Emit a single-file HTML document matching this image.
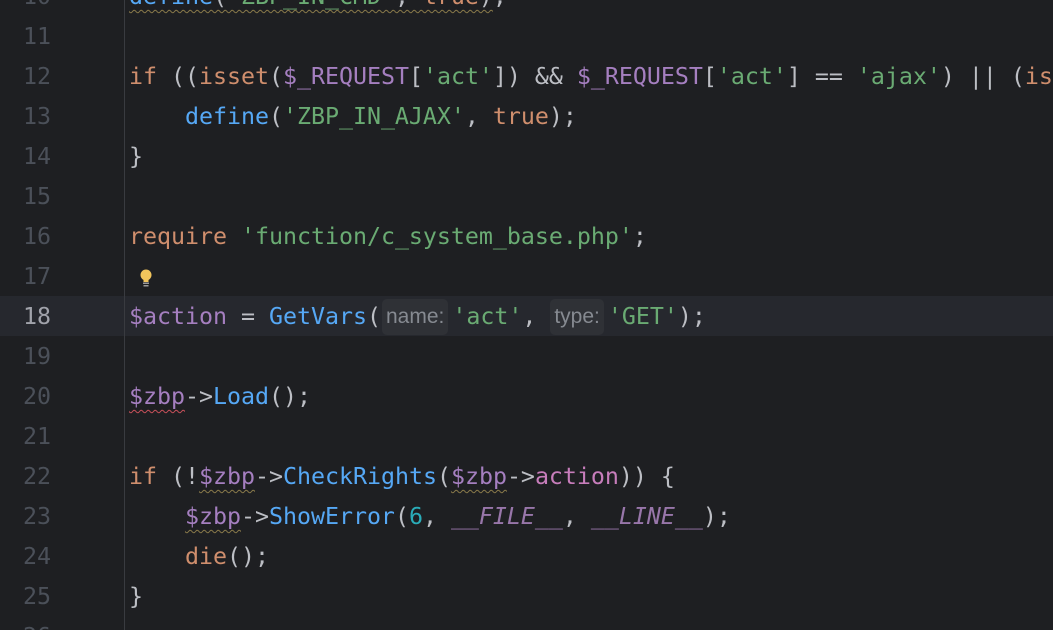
<!DOCTYPE html>
<html><head><meta charset="utf-8"><style>
html,body{margin:0;padding:0;background:#1e1f22;width:1053px;height:630px;overflow:hidden}
.wrap{position:relative;width:1053px;height:630px;font-family:"DejaVu Sans Mono","Liberation Mono",monospace;font-size:23.3px;color:#bcbec4}
.gut{position:absolute;left:124px;top:0;width:1px;height:630px;background:#393b40}
.hl{position:absolute;left:0;top:296px;width:1053px;height:40px;background:#26282e}
.ln{position:absolute;left:0;width:51px;text-align:right;height:40px;line-height:40px;color:#4b5059;white-space:pre}
.ln.cur{color:#a1a3ab}
.cd{position:absolute;left:129px;height:40px;line-height:40px;white-space:pre;letter-spacing:-0.03px}
.k{color:#cf8e6d}.f{color:#56a8f5}.s{color:#6aab73}.v{color:#a57fc0}.p{color:#c77dbb}.n{color:#2aacb8}.c{color:#9876aa;font-style:italic}
.w{text-decoration:underline wavy #8a7a4a;text-underline-offset:5px;text-decoration-thickness:1px}
.r{text-decoration:underline wavy #c9505a;text-underline-offset:5px;text-decoration-thickness:1px}
.h{display:inline-block;background:#2f3136;color:#868a91;font-family:"Liberation Sans",sans-serif;font-size:21px;line-height:36px;height:36px;padding:0 4px;border-radius:5px;vertical-align:top;margin-top:2px;letter-spacing:0}
</style></head><body><div class="wrap">
<div class="hl"></div>
<div class="gut"></div>
<div class="ln" style="top:-23px">10</div>
<div class="ln" style="top:17px">11</div>
<div class="ln" style="top:57px">12</div>
<div class="ln" style="top:97px">13</div>
<div class="ln" style="top:137px">14</div>
<div class="ln" style="top:177px">15</div>
<div class="ln" style="top:217px">16</div>
<div class="ln" style="top:257px">17</div>
<div class="ln cur" style="top:297px">18</div>
<div class="ln" style="top:337px">19</div>
<div class="ln" style="top:377px">20</div>
<div class="ln" style="top:417px">21</div>
<div class="ln" style="top:457px">22</div>
<div class="ln" style="top:497px">23</div>
<div class="ln" style="top:537px">24</div>
<div class="ln" style="top:577px">25</div>
<div class="ln" style="top:617px">26</div>

<div class="cd" style="top:-23px"><span class="w"><span class="f">define</span>(<span class="s">'ZBP_IN_CMD'</span>, <span class="k">true</span>)</span>;</div>
<div class="cd" style="top:57px"><span class="k">if</span> ((<span class="k">isset</span>(<span class="v">$_REQUEST</span>[<span class="s">'act'</span>]) &amp;&amp; <span class="v">$_REQUEST</span>[<span class="s">'act'</span>] == <span class="s">'ajax'</span>) || (<span class="k">isset</span></div>
<div class="cd" style="top:97px">    <span class="f">define</span>(<span class="s">'ZBP_IN_AJAX'</span>, <span class="k">true</span>);</div>
<div class="cd" style="top:137px">}</div>
<div class="cd" style="top:217px"><span class="k">require</span> <span class="s">'function/c_system_base.php'</span>;</div>
<div style="position:absolute;left:138px;top:268px;width:16px;height:22px">
<svg width="16" height="22" viewBox="0 0 16 22"><circle cx="8" cy="7" r="5.5" fill="#f2c55c"/><rect x="5.5" y="10" width="5" height="4" fill="#f2c55c"/><rect x="5" y="14.5" width="6" height="1.5" fill="#9a9a9a"/><rect x="5.5" y="17" width="5" height="1.5" fill="#9a9a9a"/></svg></div>
<div class="cd" style="top:297px"><span class="v">$action</span> = <span class="f">GetVars</span>(<span class="h" style="margin-left:1px;margin-right:4px">name:</span><span class="s">'act'</span>, <span class="h" style="margin-right:4px">type:</span><span class="s">'GET'</span>);</div>
<div class="cd" style="top:377px"><span class="v r">$zbp</span>-&gt;<span class="f">Load</span>();</div>
<div class="cd" style="top:457px"><span class="k">if</span> (!<span class="v w">$zbp</span>-&gt;<span class="f">CheckRights</span>(<span class="v w">$zbp</span>-&gt;<span class="p">action</span>)) {</div>
<div class="cd" style="top:497px">    <span class="v w">$zbp</span>-&gt;<span class="f">ShowError</span>(<span class="n">6</span>, <span class="c">__FILE__</span>, <span class="c">__LINE__</span>);</div>
<div class="cd" style="top:537px">    <span class="k">die</span>();</div>
<div class="cd" style="top:577px">}</div>
</div></body></html>
